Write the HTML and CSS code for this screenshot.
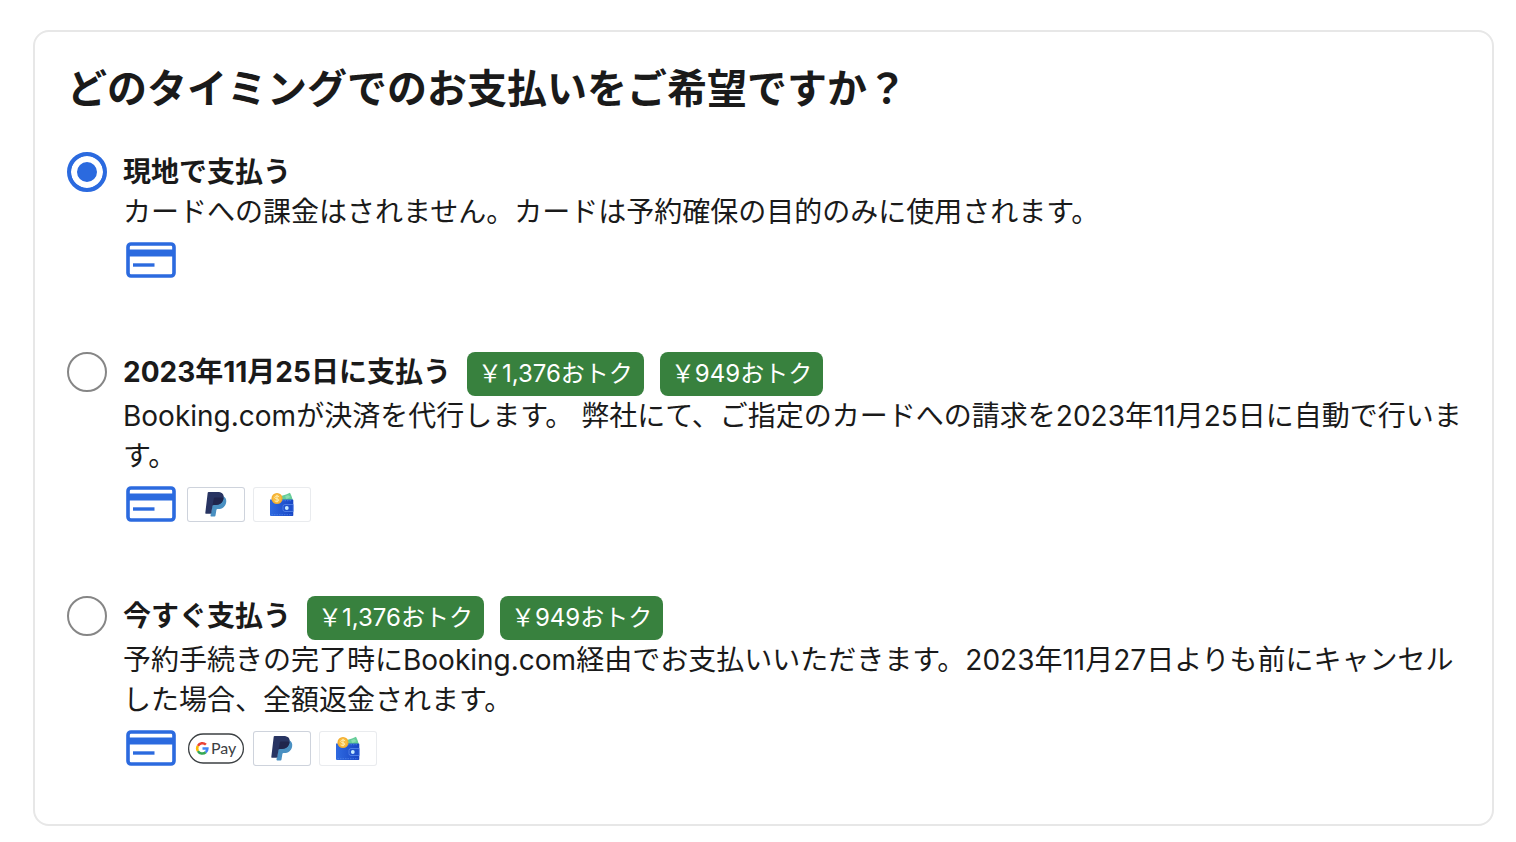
FILE: index.html
```
<!DOCTYPE html>
<html lang="ja">

	<head>
		<meta charset="UTF-8">
		<meta name="viewport" content="width=device-width, initial-scale=1.0" />
		<title>お支払いのタイミング</title>
		<link rel="stylesheet" href="styles.css">
	</head>

	<body>
		<!-- 共通アイコン -->
		<svg class="sprite" aria-hidden="true">
			<defs>
				<linearGradient id="wallet-blue" x1="0" y1="0" x2="1" y2="0">
					<stop offset="0" stop-color="#2f6ae0" />
					<stop offset="1" stop-color="#1745c4" />
				</linearGradient>
			</defs>
			<symbol id="icon-card" viewBox="0 0 56 48">
				<rect x="5" y="8" width="46" height="32" rx="3" fill="none" stroke="#2b6adf" stroke-width="3.6" />
				<path d="M5 13.5h46v7H5z" fill="#2b6adf" />
				<path d="M10 27.3h21.5v3.4H10z" fill="#2b6adf" />
			</symbol>
			<symbol id="icon-paypal" viewBox="0 0 58 35">
				<path d="M36.500 9.300c2.300 1.500 3.200 3.600 2.600 6.400c-.9 4.200-4 6.300-7.800 6.300h-.8c-.6 0-1 .4-1.100 1l-.9 5.500c-.1.600-.4.900-.9.900h-3.500c-.5 0-.7-.3-.6-.8l2.100-12z" fill="#4a90c2" />
				<path d="M21.600 5h8.800c4.700 0 6.800 2.200 6.200 6c-.8 4.700-3.700 6.900-8 6.900h-2c-.6 0-1 .4-1.100 1l-1.200 7c-.1.500-.4.800-.9.800h-4.500c-.5 0-.7-.4-.6-.8l2.400-20.100c.1-.6.400-.8.900-.8z" fill="#283462" />
				<path d="M26.800 11.500c.1-.6.500-.9 1.100-.9h5c1.500 0 2.700.1 3.600.6c-.7 4.700-3.600 6.700-7.900 6.700h-1.900c-.6 0-1 .3-1.200.7z" fill="#20254d" />
			</symbol>
			<symbol id="icon-wallet" viewBox="0 0 58 35">
				<path d="M28 9l5-1.500l4-1.700l1.500 3.200l1.300 4H28z" fill="#66cd99" />
				<path d="M32 9.500l3-1.500l2.500 2l-4 2z" fill="#8bdcb0" />
				<path d="M17 12.500h22.500a.8.8 0 0 1 .8.8v15a.8.8 0 0 1-.8.8H18a1 1 0 0 1-1-1z" fill="url(#wallet-blue)" />
				<path d="M18.500 27.700h20.500M29 13.700h10" stroke="#5c8ff0" stroke-width=".6" stroke-dasharray="1.5 1" />
				<path d="M40.300 17.500h-8.300q-2 0-2 2v3q0 2 2 2h8.300z" fill="#1f50cc" stroke="#6d9bf4" stroke-width=".6" />
				<circle cx="33.8" cy="21" r="1.900" fill="#c7ebff" />
				<circle cx="24" cy="11.500" r="5.500" fill="#f4ae2e" />
				<circle cx="24" cy="11.500" r="4.200" fill="#f8bd43" />
				<path d="M26 9.700q-2-1.500-3.500-.3t0 2.100l2.500.6q1.500.9 0 2t-3.300-.3M24 7.800v7.400" fill="none" stroke="#fff0b8" stroke-width=".9" />
			</symbol>
			<symbol id="icon-gpay" viewBox="0 0 58 35">
				<rect x="1.6" y="3" width="54.800" height="29" rx="14.500" fill="#fff" stroke="#3c4043" stroke-width="1.300" />
				<g fill="none" stroke-width="2.500">
					<path d="M18.900 13.700A5.100 5.100 0 0 0 10.900 14.900" stroke="#ea4335" />
					<path d="M10.900 14.900A5.100 5.100 0 0 0 10.900 20.100" stroke="#fbbc04" />
					<path d="M10.900 20.100A5.100 5.100 0 0 0 18.700 21.300" stroke="#34a853" />
					<path d="M18.700 21.300A5.100 5.100 0 0 0 20.400 17.500H15.500" stroke="#4285f4" />
				</g>
				<text class="gpay-text" x="24" y="23">Pay</text>
			</symbol>
		</svg>

		<form class="payment-box">
			<h2 class="payment-title">どのタイミングでのお支払いをご希望ですか？</h2>

			<!-- 現地払い -->
			<div class="option">
				<input class="option-radio" type="radio" name="timing" id="pay-hotel" checked />
				<div class="option-body">
					<div class="option-head">
						<label class="option-label" for="pay-hotel">現地で支払う</label>
					</div>
					<p class="option-text">カードへの課金はされません。カードは予約確保の目的のみに使用されます。</p>
					<div class="methods">
						<svg class="method-card"><use href="#icon-card" /></svg>
					</div>
				</div>
			</div>

			<!-- 日付指定 -->
			<div class="option">
				<input class="option-radio" type="radio" name="timing" id="pay-later" />
				<div class="option-body">
					<div class="option-head">
						<label class="option-label" for="pay-later">2023年11月25日に支払う</label>
						<span class="badge">￥1,376おトク</span>
						<span class="badge">￥949おトク</span>
					</div>
					<p class="option-text">Booking.comが決済を代行します。 弊社にて、ご指定のカードへの請求を2023年11月25日に自動で行います。</p>
					<div class="methods">
						<svg class="method-card"><use href="#icon-card" /></svg>
						<svg class="method method-paypal"><use href="#icon-paypal" /></svg>
						<svg class="method method-wallet"><use href="#icon-wallet" /></svg>
					</div>
				</div>
			</div>

			<!-- 今すぐ -->
			<div class="option">
				<input class="option-radio" type="radio" name="timing" id="pay-now" />
				<div class="option-body">
					<div class="option-head">
						<label class="option-label" for="pay-now">今すぐ支払う</label>
						<span class="badge">￥1,376おトク</span>
						<span class="badge">￥949おトク</span>
					</div>
					<p class="option-text">予約手続きの完了時にBooking.com経由でお支払いいただきます。2023年11月27日よりも前にキャンセルした場合、全額返金されます。</p>
					<div class="methods">
						<svg class="method-card"><use href="#icon-card" /></svg>
						<svg class="method"><use href="#icon-gpay" /></svg>
						<svg class="method method-paypal"><use href="#icon-paypal" /></svg>
						<svg class="method method-wallet"><use href="#icon-wallet" /></svg>
					</div>
				</div>
			</div>
		</form>
	</body>

</html>
```
FILE: styles.css
```
* {
	margin: 0;
	padding: 0;
	box-sizing: border-box;
}

body {
	padding: 30px 22px 16px 33px;
	background-color: #fff;
	color: #1a1a1a;
	font-family: Inter, "Noto Sans CJK JP", sans-serif;
	font-size: 28px;
	line-height: 40px;
}

.sprite {
	position: absolute;
	width: 0;
	height: 0;
}

.payment-box {
	padding: 28px 24px 52px 32px;
	border: 2px solid #e7e7e7;
	border-radius: 16px;
}

.payment-title {
	margin-bottom: 34px;
	font-size: 40px;
	font-weight: 700;
	line-height: 58px;
}

/* 選択肢 */
.option {
	display: flex;
	gap: 16px;
}

.option + .option {
	margin-top: 68px;
}

.option-radio {
	flex: none;
	width: 40px;
	height: 40px;
	appearance: none;
	border: 2px solid #868686;
	border-radius: 50%;
	background-color: #fff;
	cursor: pointer;
}

.option-radio:checked {
	border: 4px solid #2b6adf;
	background: #2b6adf;
	box-shadow: inset 0 0 0 6px #fff;
}

.option-body {
	flex: 1;
	min-width: 0;
}

.option-head {
	display: flex;
	flex-wrap: wrap;
	align-items: flex-start;
	gap: 0 16px;
}

.option-label {
	font-weight: 700;
	cursor: pointer;
}

.badge {
	padding: 0 11px;
	border-radius: 8px;
	background-color: #38813e;
	color: #fff;
	font-size: 24px;
	line-height: 44px;
}

/* 支払い方法アイコン */
.methods {
	display: flex;
	align-items: center;
	gap: 8px;
	height: 48px;
	margin-top: 4px;
}

.method-card {
	width: 56px;
	height: 48px;
}

.method {
	width: 58px;
	height: 35px;
	border-radius: 3px;
}

.method-paypal {
	box-shadow: inset 0 0 0 1px #ced3dc;
}

.method-wallet {
	box-shadow: inset 0 0 0 1px #e9ebee;
}

.gpay-text {
	fill: #3c4043;
	font-family: Lato, sans-serif;
	font-size: 16px;
}
```
